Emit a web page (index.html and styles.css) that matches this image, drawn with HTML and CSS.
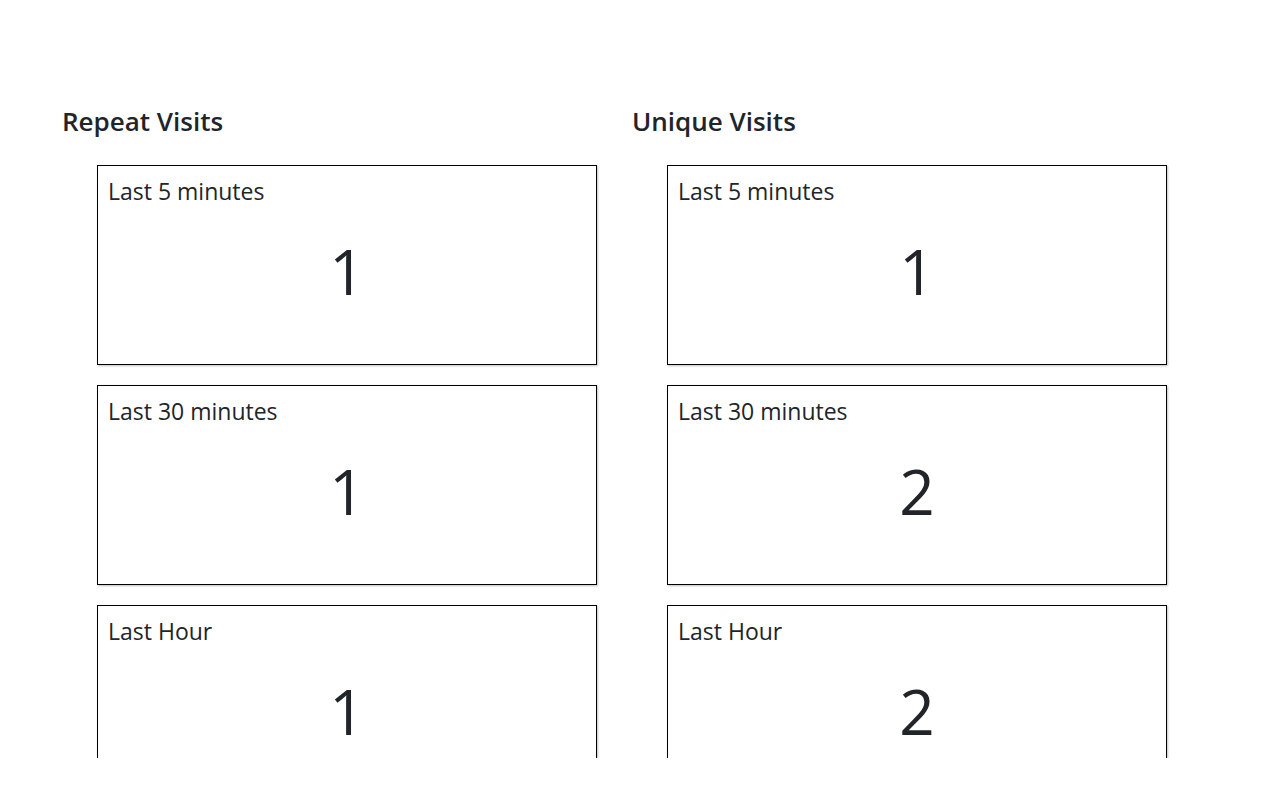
FILE: index.html
```html
<!DOCTYPE html>
<html>
<head>
<meta charset="utf-8">
<link rel="stylesheet" href="styles.css">
</head>
<body>
<div class="viewport">
  <div class="columns">
    <section class="column">
      <h2 class="title">Repeat Visits</h2>
      <div class="cards">
        <div class="card"><div class="label">Last 5 minutes</div><div class="value">1</div></div>
        <div class="card"><div class="label">Last 30 minutes</div><div class="value">1</div></div>
        <div class="card"><div class="label">Last Hour</div><div class="value">1</div></div>
      </div>
    </section>
    <section class="column">
      <h2 class="title">Unique Visits</h2>
      <div class="cards">
        <div class="card"><div class="label">Last 5 minutes</div><div class="value">1</div></div>
        <div class="card"><div class="label">Last 30 minutes</div><div class="value">2</div></div>
        <div class="card"><div class="label">Last Hour</div><div class="value">2</div></div>
      </div>
    </section>
  </div>
</div>
</body>
</html>
```

FILE: styles.css
```css
html, body {
  margin: 0;
  padding: 0;
  background: #fff;
}
body {
  font-family: "Open Sans", "Noto Sans", sans-serif;
  color: #212529;
}
.viewport {
  height: 758px;
  overflow: hidden;
}
.columns {
  display: grid;
  grid-template-columns: 570px 570px;
  padding: 105px 0 0 62px;
}
.title {
  margin: 0;
  font-size: 26px;
  font-weight: 600;
  line-height: 32px;
}
.cards {
  display: flex;
  flex-direction: column;
  gap: 20px;
  margin: 28px 0 0 35px;
}
.card {
  box-sizing: content-box;
  width: 478px;
  height: 198px;
  padding: 0 10px;
  border: 1px solid #000;
  box-shadow: 1px 1px 2px rgba(0,0,0,0.25);
}
.label {
  font-size: 23px;
  line-height: 28px;
  margin-top: 11px;
}
.value {
  margin-top: 35px;
  text-align: center;
  font-size: 62px;
  line-height: 62px;
  font-weight: 400;
}
```
